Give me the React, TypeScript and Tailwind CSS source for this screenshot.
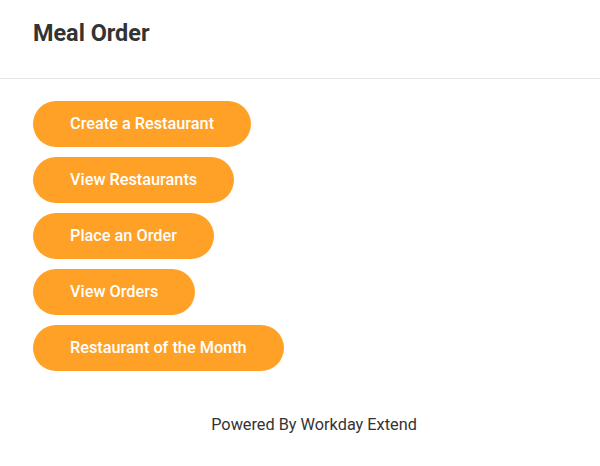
const actions = [
  "Create a Restaurant",
  "View Restaurants",
  "Place an Order",
  "View Orders",
  "Restaurant of the Month",
];

export default function App() {
  return (
    <div className="min-h-[466px] bg-white font-['Roboto',sans-serif] text-[#333333]">
      {/* Header */}
      <div className="h-[79px] border-b border-[#e6e6e6] px-[33px] pt-[18px]">
        <h1 className="text-[23.4px] font-bold leading-[31px]">Meal Order</h1>
      </div>

      {/* Actions */}
      <div className="flex flex-col items-start gap-[10px] px-[33px] pt-[22px]">
        {actions.map((label) => (
          <button
            key={label}
            className="h-[46px] rounded-full bg-[#ffa126] px-[37px] text-[16.3px] font-medium text-white"
          >
            {label}
          </button>
        ))}
      </div>

      {/* Footer */}
      <div className="pl-[33px] pr-[5px] pt-[42px] text-center text-[16.3px] leading-[24px] text-[#333333]">
        Powered By Workday Extend
      </div>
    </div>
  );
}
